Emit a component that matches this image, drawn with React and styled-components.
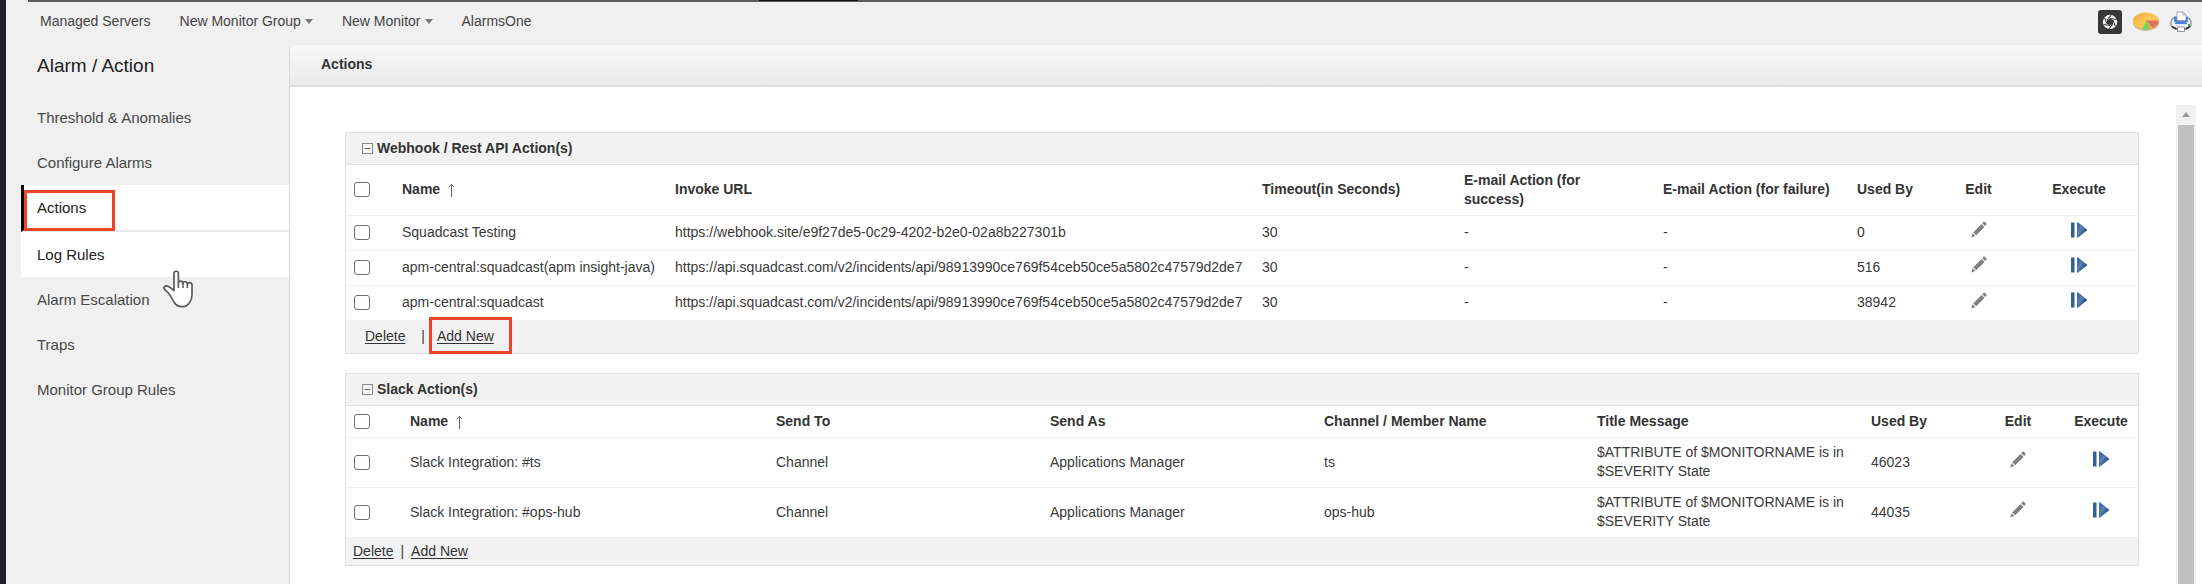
import React from "react";
import styled, { createGlobalStyle, css } from "styled-components";

const GlobalStyle = createGlobalStyle`
  *, *::before, *::after { box-sizing: border-box; }
  html, body { margin: 0; background: #f0f0f0; }
  body {
    overflow: hidden;
    font-family: "Liberation Sans", Arial, sans-serif;
    font-size: 14px;
    line-height: 19px;
    color: #3a3a3a;
  }
`;

const Frame = styled.div`
  display: flex;
  flex-direction: column;
  height: 100vh;
  border-left: 6px solid #202126;
  background: #f0f0f0;
`;

const WindowEdge = styled.div`
  flex: none;
  height: 2px;
  margin-left: 22px;
  padding-left: 731px;
  background: #5c5a5d;
`;

const WindowEdgeShade = styled.div`
  width: 99px;
  height: 1px;
  background: #111;
`;

const TopBar = styled.header`
  flex: none;
  display: flex;
  align-items: center;
  justify-content: space-between;
  height: 43px;
  padding: 0 10px 4px 34px;
`;

const TopNav = styled.nav`
  display: flex;
  gap: 29px;
`;

const TopLink = styled.a`
  display: flex;
  align-items: center;
  gap: 4px;
  color: #444;
  text-decoration: none;
`;

const Caret = styled.span`
  border: 4px solid transparent;
  border-top: 5px solid #777;
  border-bottom: 0;
`;

const Tools = styled.div`
  display: flex;
  align-items: center;
  gap: 11px;
`;

const IconButton = styled.button`
  display: inline-flex;
  padding: 0;
  border: 0;
  background: none;
  cursor: pointer;
  vertical-align: middle;
`;

const Body = styled.div`
  flex: 1;
  display: flex;
  min-height: 0;
`;

const Sidebar = styled.aside`
  flex: none;
  width: 283px;
  padding-left: 15px;
`;

const SidebarTitle = styled.h1`
  margin: 0;
  padding: 10px 16px 18px;
  font-size: 19px;
  line-height: 22px;
  font-weight: 400;
  color: #222;
`;

const SideLink = styled.a`
  position: relative;
  display: flex;
  align-items: center;
  height: 45px;
  padding-left: 16px;
  font-size: 15px;
  color: #484848;
  text-decoration: none;
  ${(p) =>
    p.$state &&
    css`
      background: #fff;
      color: #222;
    `}
  ${(p) =>
    p.$state === "active" &&
    css`
      height: 47px;
      padding-left: 13px;
      border-left: 3px solid #000;
      border-bottom: 2px solid #e8e8e8;
    `}
`;

const Highlight = styled.span`
  position: absolute;
  inset: ${(p) => p.$inset};
  border: 3px solid #ee4427;
  pointer-events: none;
`;

const Pointer = styled.svg`
  position: absolute;
  left: 142px;
  top: 38px;
  z-index: 2;
`;

const Main = styled.main`
  flex: 1;
  display: flex;
  flex-direction: column;
  min-width: 0;
  border-left: 1px solid #dcdcdc;
  border-top-left-radius: 5px;
  background: #fff;
`;

const MainHeader = styled.h2`
  flex: none;
  margin: 0;
  padding: 10px 31px 11px;
  font-size: 14px;
  line-height: 19px;
  color: #333;
  background: linear-gradient(#f8f8f8, #ebebeb);
  border-bottom: 2px solid #dedede;
  border-top-left-radius: 5px;
`;

const Scroller = styled.div`
  flex: 1;
  display: flex;
  min-height: 0;
  padding-right: 6px;
`;

const Content = styled.div`
  flex: 1;
  display: flex;
  flex-direction: column;
  gap: 19px;
  min-width: 0;
  padding: 45px 37px 0 55px;
  overflow: hidden;
`;

const ScrollTrack = styled.div`
  flex: none;
  display: flex;
  flex-direction: column;
  align-items: center;
  width: 20px;
  margin-top: 18px;
  background: #f1f1f1;
`;

const ScrollUp = styled.span`
  margin: 7px 0 8px;
  border: 4px solid transparent;
  border-bottom: 5px solid #999;
  border-top: 0;
`;

const ScrollThumb = styled.div`
  flex: 1;
  width: 16px;
  background: #c1c1c1;
`;

const Card = styled.section`
  flex: none;
  border: 1px solid #e2e2e2;
`;

const CardTitle = styled.h3`
  display: flex;
  align-items: center;
  gap: 4px;
  height: 32px;
  margin: 0;
  padding-left: 16px;
  font-size: 14px;
  color: #333;
  background: #f2f2f2;
  border-bottom: 1px solid #e2e2e2;
`;

const Table = styled.table`
  width: 100%;
  table-layout: fixed;
  border-collapse: collapse;
`;

const Row = styled.tr`
  height: ${(p) => p.$height}px;
  tbody & { border-top: 1px solid #f1f1f1; }
`;

const cell = css`
  padding: 0 8px;
  text-align: ${(p) => (p.$center ? "center" : "left")};
  vertical-align: middle;
`;

const HeadCell = styled.th`
  ${cell}
  padding-right: ${(p) => (p.$center ? 8 : 16)}px;
  color: #333;
`;

const Cell = styled.td`
  ${cell}
  white-space: ${(p) => (p.$wrap ? "normal" : "nowrap")};
`;

const ActionCell = styled(Cell)`
  padding-bottom: 7px;
`;

const Check = styled.input`
  appearance: none;
  display: block;
  width: 16px;
  height: 15px;
  margin: 0;
  border: 1px solid #6f6f6f;
  border-radius: 3px;
  background: #fff;
`;

const SortArrow = styled.svg`
  margin-left: 8px;
  vertical-align: -3px;
`;

const CardFooter = styled.footer`
  display: flex;
  align-items: center;
  gap: ${(p) => (p.$roomy ? 12 : 7)}px;
  height: ${(p) => (p.$roomy ? 33 : 28)}px;
  padding-left: ${(p) => (p.$roomy ? 19 : 7)}px;
  background: #f2f2f2;
`;

const FooterLink = styled.a`
  position: relative;
  color: #333;
  text-decoration: underline;
  text-underline-offset: 2px;
`;

const NextTab = styled.div`
  flex: none;
  width: 122px;
  margin-left: 5px;
  border-top: 1px solid #f1f1f1;
`;

const blades = [0, 60, 120, 180, 240, 300];

const CameraIcon = () => (
  <svg width="24" height="24" viewBox="0 0 24 24" aria-hidden="true">
    <rect width="24" height="24" rx="3" fill="#38383a" />
    <circle cx="12" cy="12" r="7.200" fill="#f4f4f4" />
    <path d="M12 8.500l3 1.750v3.500l-3 1.750-3-1.750v-3.500z" fill="#38383a" />
    {blades.map((angle) => (
      <path
        key={angle}
        d="M12 8.500L18.500 9.500"
        transform={`rotate(${angle} 12 12)`}
        stroke="#38383a"
        strokeWidth="1"
      />
    ))}
  </svg>
);

const PieIcon = () => (
  <svg width="26" height="20" viewBox="0 0 26 20" aria-hidden="true">
    <defs>
      <linearGradient id="pie" x1="0" y1="0" x2="1" y2="1">
        <stop offset="0" stopColor="#f0a53e" />
        <stop offset="0.5" stopColor="#fccb58" />
        <stop offset="1" stopColor="#ee9a4a" />
      </linearGradient>
    </defs>
    <ellipse cx="13" cy="10.500" rx="13" ry="8.500" fill="#d3b48d" />
    <ellipse cx="13" cy="9" rx="13" ry="8.500" fill="url(#pie)" />
    <path d="M13 8.500l12.900 0.300c-0.200 3-2.600 5.600-6.400 7.200z" fill="#e2705a" />
    <path d="M13.500 8.500l3.500 8.300c-2.700.8-5 .8-7.500.4z" fill="#69d95a" />
  </svg>
);

const PrinterIcon = () => (
  <svg width="22" height="21" viewBox="0 0 22 21" aria-hidden="true">
    <path d="M3 7h16l2 3v5l-4 3H5l-4-3v-5z" fill="#eef1f5" stroke="#68727f" />
    <path d="M4 5.500h14v5l-3 2H7l-3-2z" fill="#4b83d8" />
    <path d="M7 1h6l3 3v5.500H7z" fill="#fff" stroke="#8b94a3" strokeWidth="0.800" />
    <path d="M13 1v3h3" fill="none" stroke="#8b94a3" strokeWidth="0.800" />
    <path d="M5 12.500h12" stroke="#4b83d8" strokeWidth="1.200" />
    <path d="M2 15.500l4.500 2.500M20 15.500l-4.500 2.500" fill="none" stroke="#2b2d31" strokeWidth="1.600" />
    <path d="M7.500 16h7v4.500h-7z" fill="#fff" stroke="#777" strokeWidth="0.800" />
    <rect x="18" y="13" width="2" height="2" fill="#43a047" />
  </svg>
);

const ToggleIcon = () => (
  <svg width="11" height="11" viewBox="0 0 11 11" aria-hidden="true">
    <rect x="0.500" y="0.500" width="10" height="10" fill="#f6f6f6" stroke="#8a8a8a" />
    <path d="M2.500 5.500h6" stroke="#666" />
  </svg>
);

const PencilIcon = () => (
  <svg width="16" height="17" viewBox="0 0 16 17" aria-hidden="true">
    <path d="M0.300 16.500l1.200-4.200 2.900 2.800z" fill="#808080" />
    <path d="M2.200 11.400l8.300-8.400 3 2.900-8.300 8.400z" fill="#808080" />
    <path d="M11.200 2.200l1.200-1.300c.5-.5 1.100-.5 1.600 0l1.300 1.300c.5.500.5 1.100 0 1.600l-1.200 1.300z" fill="#808080" />
  </svg>
);

const PlayIcon = () => (
  <svg width="16" height="16" viewBox="0 0 16 16" aria-hidden="true">
    <defs>
      <linearGradient id="play" x1="0" y1="0" x2="1" y2="1">
        <stop offset="0" stopColor="#24508a" />
        <stop offset="0.400" stopColor="#5c86b8" />
        <stop offset="0.700" stopColor="#24508a" />
      </linearGradient>
    </defs>
    <rect x="0" y="0.500" width="3.500" height="15" fill="#2f5f95" />
    <path d="M6.500 0.500L16 8l-9.500 7.500z" fill="url(#play)" stroke="#2f5f95" strokeWidth="0.800" />
  </svg>
);

const HandPointer = () => (
  <Pointer width="31" height="38" viewBox="0 0 31 38" aria-hidden="true">
    <path
      d="M11 20.500V3.500c0-3 4.400-3 4.400 0V13c0-2.600 4.600-2.400 4.600.4 0-2.400 4.400-2.200 4.400.7 0-2.200 4.600-2 4.600 1.200v9.200c0 3.600-.8 6-2.500 8.300-1.800 2.600-4.200 3.900-7.200 3.900-3.600 0-6.300-1.500-8-4.200-1.400-2.200-2.600-4.500-4-6.700C5.800 23 3.800 21.500 2 19.800c-2.400-2.300-.2-4.800 3-3.500 2 .8 4 2.500 6 4.200z"
      fill="#fff"
      stroke="#5a5a5a"
      strokeWidth="1.700"
      strokeLinejoin="round"
    />
    <path d="M15.400 12v6M20 13v5M24.400 14v4" stroke="#5a5a5a" strokeWidth="1.500" />
  </Pointer>
);

const topLinks = [
  { label: "Managed Servers" },
  { label: "New Monitor Group", menu: true },
  { label: "New Monitor", menu: true },
  { label: "AlarmsOne" },
];

const sideLinks = [
  { label: "Threshold & Anomalies" },
  { label: "Configure Alarms" },
  { label: "Actions", state: "active" },
  { label: "Log Rules", state: "hover" },
  { label: "Alarm Escalation" },
  { label: "Traps" },
  { label: "Monitor Group Rules" },
];

const webhookColumns = [
  { label: "Name", width: 273, sorted: true },
  { label: "Invoke URL" },
  { label: "Timeout(in Seconds)", width: 202 },
  { label: "E-mail Action (for success)", width: 199 },
  { label: "E-mail Action (for failure)", width: 194 },
  { label: "Used By", width: 88 },
  { label: "Edit", width: 83, center: true },
  { label: "Execute", width: 118, center: true },
];

const squadcastUrl =
  "https://api.squadcast.com/v2/incidents/api/98913990ce769f54ceb50ce5a5802c47579d2de7";

const webhookRows = [
  ["Squadcast Testing", "https://webhook.site/e9f27de5-0c29-4202-b2e0-02a8b227301b", "30", "-", "-", "0"],
  ["apm-central:squadcast(apm insight-java)", squadcastUrl, "30", "-", "-", "516"],
  ["apm-central:squadcast", squadcastUrl, "30", "-", "-", "38942"],
];

const slackColumns = [
  { label: "Name", width: 366, sorted: true },
  { label: "Send To", width: 274 },
  { label: "Send As", width: 274 },
  { label: "Channel / Member Name" },
  { label: "Title Message", width: 274, wrap: true },
  { label: "Used By", width: 109 },
  { label: "Edit", width: 92, center: true },
  { label: "Execute", width: 74, center: true },
];

const titleMessage = "$ATTRIBUTE of $MONITORNAME is in $SEVERITY State";

const slackRows = [
  ["Slack Integration: #ts", "Channel", "Applications Manager", "ts", titleMessage, "46023"],
  ["Slack Integration: #ops-hub", "Channel", "Applications Manager", "ops-hub", titleMessage, "44035"],
];

function ActionTable({ columns, rows, checkWidth, headHeight, rowHeight }) {
  return (
    <Table>
      <colgroup>
        <col width={checkWidth} />
        {columns.map((c) => (
          <col key={c.label} width={c.width} />
        ))}
      </colgroup>
      <thead>
        <Row $height={headHeight}>
          <HeadCell>
            <Check type="checkbox" aria-label="Select all" />
          </HeadCell>
          {columns.map((c) => (
            <HeadCell key={c.label} $center={c.center}>
              {c.label}
              {c.sorted && (
                <SortArrow width="7" height="14" viewBox="0 0 7 14" aria-hidden="true">
                  <path d="M3.500 14V1.500M1 4l2.500-2.700L6 4" fill="none" stroke="#666" strokeWidth="1" />
                </SortArrow>
              )}
            </HeadCell>
          ))}
        </Row>
      </thead>
      <tbody>
        {rows.map((row) => (
          <Row key={row[0]} $height={rowHeight}>
            <Cell>
              <Check type="checkbox" aria-label={`Select ${row[0]}`} />
            </Cell>
            {row.map((value, i) => (
              <Cell key={columns[i].label} $wrap={columns[i].wrap}>
                {value}
              </Cell>
            ))}
            <ActionCell $center>
              <IconButton type="button" aria-label={`Edit ${row[0]}`}>
                <PencilIcon />
              </IconButton>
            </ActionCell>
            <ActionCell $center>
              <IconButton type="button" aria-label={`Execute ${row[0]}`}>
                <PlayIcon />
              </IconButton>
            </ActionCell>
          </Row>
        ))}
      </tbody>
    </Table>
  );
}

function ActionCard({ title, roomy, highlightAdd, ...table }) {
  return (
    <Card>
      <CardTitle>
        <IconButton type="button" aria-label={`Collapse ${title}`}>
          <ToggleIcon />
        </IconButton>
        {title}
      </CardTitle>
      <ActionTable {...table} />
      <CardFooter $roomy={roomy}>
        <FooterLink href="#delete">Delete</FooterLink>
        <span>{roomy ? "\u00a0|" : "|"}</span>
        <FooterLink href="#add">
          Add New
          {highlightAdd && <Highlight $inset="-10px -18px -8px -8px" />}
        </FooterLink>
      </CardFooter>
    </Card>
  );
}

export default function App() {
  return (
    <>
      <GlobalStyle />
      <Frame>
        <WindowEdge>
          <WindowEdgeShade />
        </WindowEdge>
        <TopBar>
          <TopNav>
            {topLinks.map((l) => (
              <TopLink key={l.label} href="#nav">
                {l.label}
                {l.menu && <Caret />}
              </TopLink>
            ))}
          </TopNav>
          <Tools>
            <IconButton type="button" aria-label="Snapshot"><CameraIcon /></IconButton>
            <IconButton type="button" aria-label="Reports"><PieIcon /></IconButton>
            <IconButton type="button" aria-label="Print"><PrinterIcon /></IconButton>
          </Tools>
        </TopBar>
        <Body>
          <Sidebar>
            <SidebarTitle>Alarm / Action</SidebarTitle>
            <nav>
              {sideLinks.map((l) => (
                <SideLink key={l.label} href="#section" $state={l.state}>
                  {l.label}
                  {l.state === "active" && <Highlight $inset="5px 174px -1px 0" />}
                  {l.state === "hover" && <HandPointer />}
                </SideLink>
              ))}
            </nav>
          </Sidebar>
          <Main>
            <MainHeader>Actions</MainHeader>
            <Scroller>
              <Content>
                <ActionCard
                  title="Webhook / Rest API Action(s)"
                  columns={webhookColumns}
                  rows={webhookRows}
                  checkWidth={48}
                  headHeight={50}
                  rowHeight={35}
                  roomy
                  highlightAdd
                />
                <ActionCard
                  title="Slack Action(s)"
                  columns={slackColumns}
                  rows={slackRows}
                  checkWidth={56}
                  headHeight={31}
                  rowHeight={50}
                />
                <NextTab />
              </Content>
              <ScrollTrack>
                <ScrollUp />
                <ScrollThumb />
              </ScrollTrack>
            </Scroller>
          </Main>
        </Body>
      </Frame>
    </>
  );
}
